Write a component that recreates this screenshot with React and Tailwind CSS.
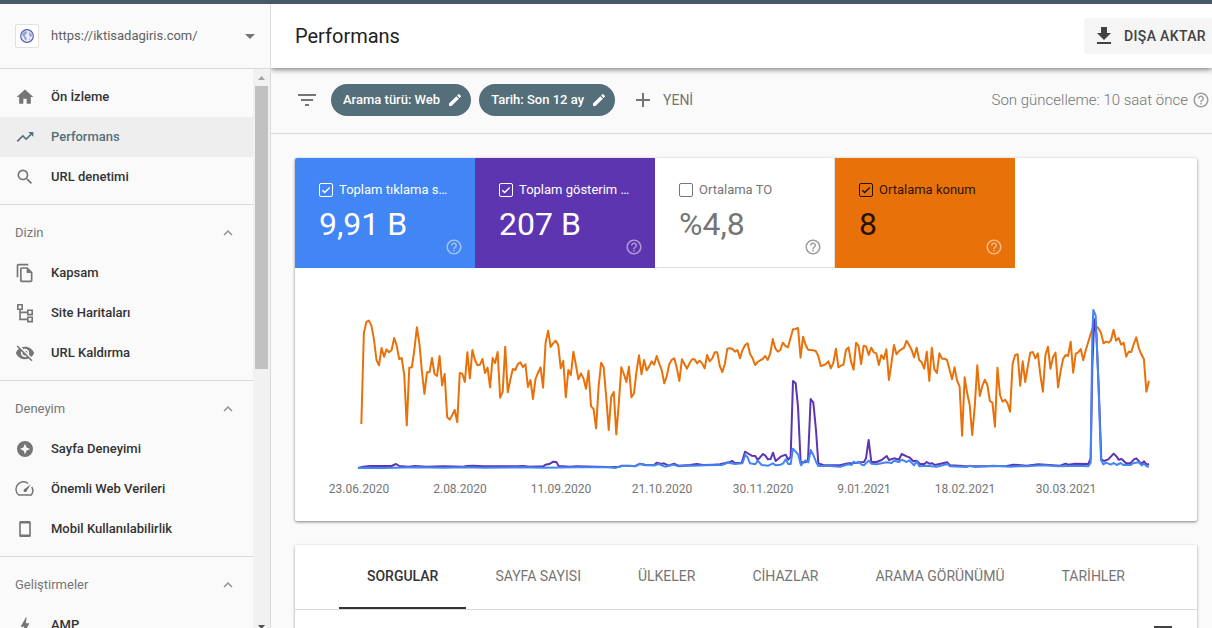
import { useState } from 'react';
import {
  MdAdd,
  MdArrowDropDown,
  MdBolt,
  MdEdit,
  MdExpandLess,
  MdFileDownload,
  MdFilterList,
  MdHelpOutline,
  MdHome,
  MdOutlineFileCopy,
  MdSearch,
  MdTrendingUp,
  MdVisibilityOff,
} from 'react-icons/md';

function SitemapIcon() {
  return (
    <svg width="20" height="20" viewBox="0 0 20 20" fill="none" stroke="currentColor" strokeWidth="1.6">
      <path d="M2.8 1.8h4.4v4.4H2.8zM12.8 7.2h4.4v4.4h-4.4zM12.8 14.2h4.4v4.4h-4.4zM5 6.2v10.2h7.8M5 9.4h7.8" />
    </svg>
  );
}

function ExperienceIcon() {
  return (
    <svg width="20" height="20" viewBox="0 0 20 20" fill="currentColor">
      <path fillRule="evenodd" d="M10 2a8 8 0 1 0 0 16 8 8 0 0 0 0-16zm0 2.8 1.6 3.6 3.6 1.6-3.6 1.6L10 15.2l-1.6-3.6L4.8 10l3.6-1.6z" />
    </svg>
  );
}

function VitalsIcon() {
  return (
    <svg width="20" height="20" viewBox="0 0 20 20" fill="none" stroke="currentColor" strokeWidth="1.5">
      <path d="M13.2 4.5A7.4 7.4 0 0 0 3.7 16h12.6a7.4 7.4 0 0 0 .4-8.2" />
      <path d="m15.8 5.2-4.4 7.2a1.6 1.6 0 1 1-2.5-2z" fill="currentColor" stroke="none" />
    </svg>
  );
}

function PhoneIcon() {
  return (
    <svg width="20" height="20" viewBox="0 0 20 20" fill="currentColor">
      <path fillRule="evenodd" d="M5.8 2h8.4c.9 0 1.6.7 1.6 1.6v12.8c0 .9-.7 1.6-1.6 1.6H5.8c-.9 0-1.6-.7-1.6-1.6V3.6C4.2 2.7 4.9 2 5.8 2zm0 2.4v11.2h8.4V4.4z" />
    </svg>
  );
}

function GlobeIcon() {
  return (
    <svg width="14" height="14" viewBox="0 0 14 14">
      <circle cx="7" cy="7" r="6.3" fill="#eceefa" stroke="#5360b5" strokeWidth="1.2" />
      <path d="M2.5 4 5.5 2l2 1-1 2L5 6l.5 1.5L7 9l-.8 2.5-1.7-1.2L4 8 2 6.5zM9 3l2.5 1.5.6 2.5-1.6 1L9 6.500zM9 9.500l1.5.3-1 1.700z" fill="#97a6d3" />
    </svg>
  );
}

const navGroups = [
  {
    items: [
      { label: 'Ön İzleme', icon: <MdHome size={20} /> },
      { label: 'Performans', icon: <MdTrendingUp size={20} />, active: true },
      { label: 'URL denetimi', icon: <MdSearch size={20} /> },
    ],
  },
  {
    title: 'Dizin',
    items: [
      { label: 'Kapsam', icon: <MdOutlineFileCopy size={20} /> },
      { label: 'Site Haritaları', icon: <SitemapIcon /> },
      { label: 'URL Kaldırma', icon: <MdVisibilityOff size={20} /> },
    ],
  },
  {
    title: 'Deneyim',
    items: [
      { label: 'Sayfa Deneyimi', icon: <ExperienceIcon /> },
      { label: 'Önemli Web Verileri', icon: <VitalsIcon /> },
      { label: 'Mobil Kullanılabilirlik', icon: <PhoneIcon /> },
    ],
  },
  {
    title: 'Geliştirmeler',
    items: [{ label: 'AMP', icon: <MdBolt size={20} /> }],
  },
];

const metrics = [
  { id: 'clicks', label: 'Toplam tıklama sayısı', value: '9,91 B', checked: true, tile: 'bg-[#4285f4] text-white', help: 'text-white/50' },
  { id: 'impressions', label: 'Toplam gösterim sayısı', value: '207 B', checked: true, tile: 'bg-[#5e35b1] text-white', help: 'text-white/50' },
  { id: 'ctr', label: 'Ortalama TO', value: '%4,8', checked: false, tile: 'border-r border-b border-[#e0e0e0] bg-white text-[#757575]', help: 'text-[#9e9e9e]' },
  { id: 'position', label: 'Ortalama konum', value: '8', checked: true, tile: 'bg-[#e8710a] text-black/85', help: 'text-white/50' },
];

const tabs = ['SORGULAR', 'SAYFA SAYISI', 'ÜLKELER', 'CİHAZLAR', 'ARAMA GÖRÜNÜMÜ', 'TARİHLER'];

const dates = ['23.06.2020', '2.08.2020', '11.09.2020', '21.10.2020', '30.11.2020', '9.01.2021', '18.02.2021', '30.03.2021'];

// one value per day
const position = [
  372, 100, 66, 62, 77, 118, 180, 196, 144, 170, 148, 157, 150, 114, 136, 177, 174, 225, 376, 203, 202, 150, 82, 130, 215,
  282, 217, 217, 174, 222, 228, 168, 256, 222, 351, 359, 345, 330, 367, 219, 221, 246, 157, 235, 150, 180, 196, 194, 177,
  219, 203, 262, 174, 189, 156, 293, 275, 140, 277, 240, 207, 210, 192, 187, 201, 193, 261, 240, 297, 237, 218, 202, 263,
  128, 92, 141, 130, 122, 135, 205, 183, 292, 210, 225, 155, 195, 238, 220, 235, 266, 212, 319, 327, 385, 260, 188, 202,
  290, 390, 290, 276, 403, 310, 202, 222, 246, 200, 292, 280, 215, 166, 223, 180, 211, 200, 184, 194, 168, 190, 210, 250,
  228, 192, 179, 175, 205, 243, 178, 192, 206, 190, 178, 178, 190, 182, 190, 205, 165, 184, 175, 157, 157, 198, 216, 192,
  146, 145, 147, 155, 150, 175, 150, 136, 130, 162, 175, 195, 186, 181, 177, 168, 180, 160, 117, 145, 155, 150, 128, 138,
  142, 115, 88, 87, 84, 173, 110, 135, 149, 150, 151, 153, 167, 198, 196, 192, 184, 205, 188, 146, 202, 197, 194, 150,
  142, 185, 209, 128, 138, 192, 137, 140, 165, 143, 157, 160, 195, 165, 177, 148, 240, 190, 135, 163, 153, 148, 143, 122,
  135, 150, 172, 143, 180, 187, 206, 155, 243, 143, 208, 219, 160, 176, 176, 180, 208, 238, 202, 242, 260, 407, 232, 280,
  315, 405, 320, 196, 288, 258, 239, 255, 303, 308, 380, 203, 285, 305, 299, 310, 335, 192, 165, 163, 257, 184, 246, 200,
  158, 156, 175, 160, 225, 275, 165, 140, 206, 172, 158, 262, 215, 177, 165, 168, 125, 218, 161, 157, 147, 181, 150, 125,
  100, 78, 78, 85, 98, 130, 125, 128, 120, 89, 122, 114, 134, 128, 170, 155, 156, 132, 112, 145, 163, 177, 275, 242,
];

const shift = (dx, points) => points.map(([x, y]) => [x + dx, y]);

const impressions = [
  [24, 504], [40, 500], [60, 498], [125, 498], [138, 492], [148, 498], [175, 500], [195, 498], [230, 500], [280, 499],
  [340, 500], [350, 498], [370, 497], [400, 499], [500, 499], [520, 498], [540, 500], [580, 499], [587, 494], [600, 491],
  [610, 485], [619, 486], [626, 498], [660, 500], [680, 499], [770, 501],
  ...shift(780, [
    [0, 502], [30, 500], [35, 497], [60, 497], [75, 499], [90, 491], [105, 494], [132, 496], [140, 488], [155, 492],
    [162, 490], [175, 497], [192, 491], [205, 497], [240, 495], [260, 492], [280, 495], [310, 494], [330, 493], [350, 488],
    [360, 486], [367, 483], [375, 489], [395, 489], [405, 455], [412, 459], [425, 467], [436, 468], [443, 480], [452, 470],
    [459, 462], [466, 467], [474, 478], [482, 477], [489, 458], [497, 483], [512, 470], [527, 464], [535, 479], [542, 470],
    [549, 243], [557, 250], [564, 320], [572, 487], [587, 487], [594, 480], [602, 297], [610, 308], [618, 390], [625, 490],
    [640, 495], [690, 496], [715, 490], [740, 489],
  ]),
  ...shift(1530, [
    [0, 487], [12, 486], [18, 475], [26, 420], [34, 486], [50, 486], [65, 480], [80, 468], [87, 480], [102, 475],
    [117, 479], [125, 462], [140, 469], [148, 472], [160, 484], [170, 482], [180, 492], [193, 492], [200, 486], [208, 491],
    [217, 490], [225, 495], [262, 487], [270, 496], [310, 498], [380, 499], [440, 498], [460, 494], [500, 497], [535, 493],
    [600, 497], [617, 491], [625, 494], [645, 491], [685, 492], [692, 475], [697, 200], [703, 58], [709, 100], [716, 260],
    [724, 478], [732, 483], [745, 478], [761, 461], [770, 470], [776, 479], [785, 477], [798, 490], [812, 489], [822, 478],
    [829, 475], [838, 485], [845, 491], [852, 484], [860, 494], [867, 492],
  ]),
];

const clicks = [
  [24, 504], [60, 503], [100, 504], [200, 502], [280, 503], [350, 502], [400, 503], [500, 502], [580, 503], [680, 502], [770, 502],
  ...shift(780, [
    [0, 502], [15, 504], [35, 498], [75, 498], [90, 492], [105, 496], [135, 496], [145, 492], [165, 500], [190, 494],
    [205, 499], [290, 496], [335, 495], [355, 488], [375, 492], [397, 490], [406, 465], [413, 472], [420, 490], [436, 493],
    [443, 482], [455, 495], [475, 497], [489, 490], [497, 496], [512, 494], [520, 490], [527, 478], [535, 492], [542, 492],
    [549, 446], [557, 455], [565, 465], [573, 496], [580, 487], [587, 481], [595, 487], [602, 450], [610, 465], [618, 485],
    [625, 498], [660, 498], [690, 500], [715, 493], [725, 495], [731, 485], [738, 489], [746, 485],
  ]),
  ...shift(1530, [
    [5, 494], [12, 496], [26, 482], [34, 491], [50, 493], [80, 487], [95, 489], [102, 482], [117, 486], [125, 479],
    [140, 486], [148, 481], [162, 496], [170, 484], [178, 499], [200, 497], [230, 500], [262, 492], [270, 499], [320, 501],
    [330, 497], [345, 501], [400, 497], [450, 500], [480, 498], [500, 499], [550, 496], [595, 499], [655, 497], [685, 499],
    [692, 488], [697, 100], [700, 30], [707, 46], [713, 190], [717, 300], [723, 480], [730, 493], [738, 488], [752, 494],
    [762, 489], [770, 495], [782, 489], [790, 495], [812, 495], [822, 489], [836, 487], [845, 496], [852, 491], [860, 499],
    [867, 500],
  ]),
];

const toPoints = (points) => points.map(([x, y]) => `${x},${y}`).join(' ');

function PerformanceChart() {
  return (
    <svg viewBox="0 0 902 253" className="block w-full" role="img" aria-label="Performans grafiği">
      <g transform="translate(55 32) scale(0.33333)" fill="none" strokeWidth="6" strokeLinejoin="round">
        <polyline stroke="#e8710a" points={toPoints(position.map((y, i) => [34 + i * 7.573, y]))} />
        <polyline stroke="#5e35b1" points={toPoints(impressions)} />
        <polyline stroke="#4285f4" points={toPoints(clicks)} />
      </g>
      <g fill="#757575" fontSize="12" textAnchor="middle">
        {dates.map((date, i) => (
          <text key={date} x={64 + i * 101} y="225">{date}</text>
        ))}
      </g>
    </svg>
  );
}

function Metric({ metric }) {
  const [checked, setChecked] = useState(metric.checked);

  return (
    <div className={`flex h-[110px] w-[180px] flex-col pt-6 pl-6 ${metric.tile}`}>
      <div className="flex items-center gap-1.5 pr-6">
        <span className="grid size-3.5 shrink-0">
          <input
            id={metric.id}
            type="checkbox"
            checked={checked}
            onChange={(e) => setChecked(e.target.checked)}
            className="peer col-start-1 row-start-1 size-3.5 appearance-none rounded-xs border border-current"
          />
          <svg viewBox="0 0 14 14" fill="none" stroke="currentColor" strokeWidth="1.5" className="pointer-events-none invisible col-start-1 row-start-1 size-3.5 peer-checked:visible">
            <path d="m3.3 7.2 2.4 2.3 5-5" />
          </svg>
        </span>
        <label htmlFor={metric.id} className="truncate text-[13px] leading-4">{metric.label}</label>
      </div>
      <div className="mt-2 text-[32px] leading-9">{metric.value}</div>
      <button aria-label="Yardım" className={`-mt-1 mr-3 self-end ${metric.help}`}><MdHelpOutline size={18} /></button>
    </div>
  );
}

function Sidebar() {
  return (
    <aside className="flex w-[271px] shrink-0 flex-col border-r border-[#dadada]">
      <button className="flex h-[65px] shrink-0 items-center border-b border-[#dadada] pr-2 pl-[15px] text-left">
        <span className="flex size-6 items-center justify-center rounded-xs border border-[#e0e0e0] bg-white"><GlobeIcon /></span>
        <span className="ml-3 flex-1 text-[13px] text-[#616161]">https://iktisadagiris.com/</span>
        <MdArrowDropDown size={24} className="text-[#757575]" />
      </button>
      <div className="flex min-h-0 flex-1 overflow-hidden">
        <nav className="min-w-0 flex-1">
          {navGroups.map((group) => (
            <div key={group.title || 'main'} className="border-b border-[#dadada] pt-2 pb-[7px]">
              {group.title && (
                <button className="flex h-10 w-full items-center justify-between pr-4 pl-[15px] text-[13px] text-[#757575]">
                  {group.title}
                  <MdExpandLess size={18} className="text-[#8e8e8e]" />
                </button>
              )}
              {group.items.map((item) => (
                <a
                  key={item.label}
                  href="#"
                  className={`flex h-10 items-center gap-4 pl-[15px] text-[13px] font-medium ${item.active ? 'bg-[#eeeeee] text-[#546e7a]' : 'text-[#333333]'}`}
                >
                  <span className={item.active ? 'text-[#546e7a]' : 'text-[#757575]'}>{item.icon}</span>
                  {item.label}
                </a>
              ))}
            </div>
          ))}
        </nav>
        <div className="flex h-[calc(100vh-62px)] w-[17px] shrink-0 flex-col items-center bg-[#f1f1f1]">
          <svg width="17" height="17" viewBox="0 0 17 17" className="shrink-0"><path d="M5 11h7L8.500 7z" fill="#a3a3a3" /></svg>
          <div className="h-1/2 w-[13px] bg-[#c1c1c1]" />
          <svg width="17" height="17" viewBox="0 0 17 17" className="mt-auto shrink-0"><path d="M5 7h7l-3.500 4z" fill="#505050" /></svg>
        </div>
      </div>
    </aside>
  );
}

function Chip({ children }) {
  return (
    <button className="flex h-8 items-center gap-[7px] rounded-full bg-[#546e7a] pr-2 pl-3 text-[13px] font-medium text-white">
      {children}
      <MdEdit size={16} />
    </button>
  );
}

export default function App() {
  const [activeTab, setActiveTab] = useState(tabs[0]);

  return (
    <div className="flex h-screen flex-col overflow-hidden bg-[#fafafa] font-['Roboto',sans-serif] text-[#212121]">
      <div className="h-1 shrink-0 bg-[#455a64]" />
      <div className="flex min-h-0 flex-1">
        <Sidebar />
        <main className="min-w-0 flex-1 overflow-hidden">
          <header className="relative flex h-16 items-center justify-between bg-white pl-6 shadow-[0_1px_6px_rgba(0,0,0,0.6)]">
            <h1 className="text-xl">Performans</h1>
            <button className="flex h-9 items-center gap-2 rounded-l bg-[#f5f5f5] pr-1.5 pl-2 text-sm font-medium tracking-wide text-[#424242]">
              <MdFileDownload size={24} />
              DIŞA AKTAR
            </button>
          </header>

          <div className="flex items-center border-b border-[#dadada] pt-4 pr-0.5 pb-[17px] pl-6 text-[#757575]">
            <MdFilterList size={24} />
            <div className="ml-3 flex gap-2">
              <Chip>Arama türü: Web</Chip>
              <Chip>Tarih: Son 12 ay</Chip>
            </div>
            <button className="ml-4 flex items-center gap-2 text-sm">
              <MdAdd size={24} />
              YENİ
            </button>
            <span className="ml-auto text-[15px] font-light">Son güncelleme: 10 saat önce</span>
            <MdHelpOutline size={18} className="ml-1 text-[#9e9e9e]" />
          </div>

          <div className="space-y-6 pt-6 pr-[15px] pl-6">
            <section className="overflow-hidden rounded-xs bg-white shadow-[0_1px_3px_rgba(0,0,0,0.5)]">
              <div className="flex">
                {metrics.map((metric) => <Metric key={metric.id} metric={metric} />)}
              </div>
              <PerformanceChart />
            </section>

            <section className="rounded-xs bg-white shadow-[0_1px_3px_rgba(0,0,0,0.4)]">
              <div role="tablist" className="flex h-[65px] justify-center gap-px border-b border-[#dadada]">
                {tabs.map((tab) => (
                  <button
                    key={tab}
                    role="tab"
                    aria-selected={tab === activeTab}
                    onClick={() => setActiveTab(tab)}
                    className={`border-b-2 px-7 text-sm ${tab === activeTab ? 'border-[#333333] font-medium text-[#333333]' : 'border-transparent text-[#757575]'}`}
                  >
                    {tab}
                  </button>
                ))}
              </div>
              <div className="flex h-40 justify-end pt-2.5 pr-[22px] text-[#424242]">
                <MdFilterList size={24} />
              </div>
            </section>
          </div>
        </main>
      </div>
    </div>
  );
}
